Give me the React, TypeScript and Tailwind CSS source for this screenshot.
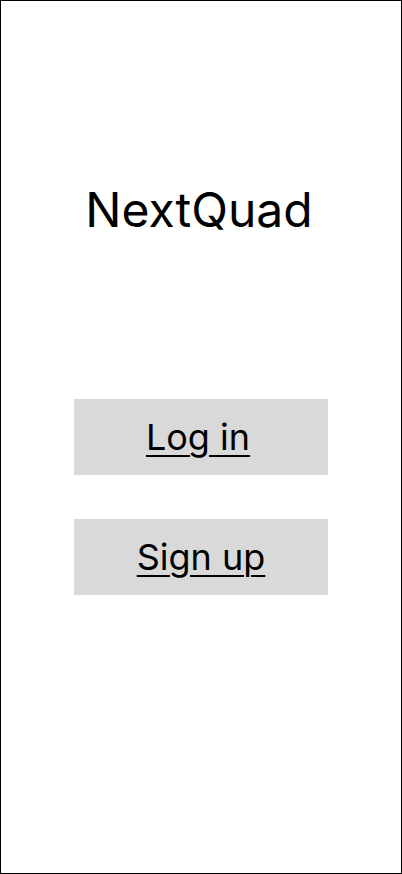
export default function App() {
  return (
    <div
      className="w-[402px] h-[874px] bg-white flex flex-col items-center border border-black"
      style={{ fontFamily: "Inter, 'Noto Sans', sans-serif" }}
    >
      <h1 className="mt-[180px] h-[58px] flex items-center pr-[4px] text-[48px] leading-none text-black font-normal">
        NextQuad
      </h1>
      <a className="mt-[160px] w-[254px] h-[76px] bg-[#d9d9d9] flex items-center justify-center pr-[6px] text-[36px] text-black underline underline-offset-[5px] decoration-[2px]">
        Log in
      </a>
      <a className="mt-[44px] w-[254px] h-[76px] bg-[#d9d9d9] flex items-center justify-center text-[36px] text-black underline underline-offset-[5px] decoration-[2px]">
        Sign up
      </a>
    </div>
  );
}
